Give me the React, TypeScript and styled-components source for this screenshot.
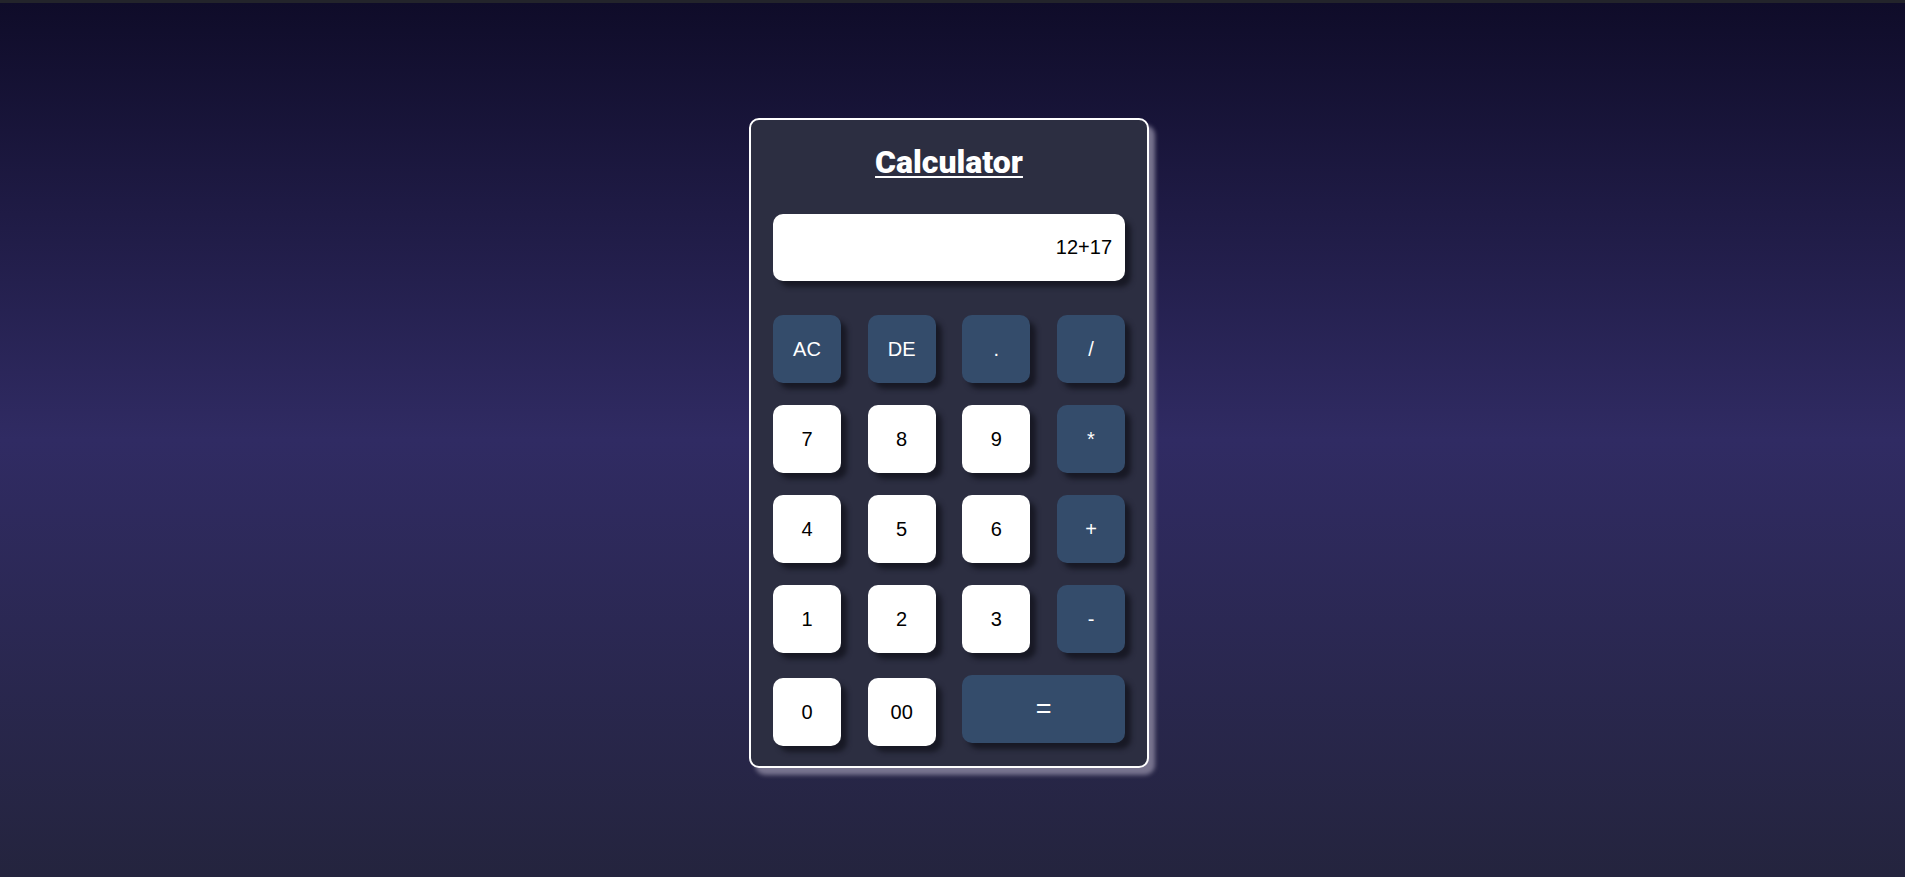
import React from "react";
import styled, { createGlobalStyle } from "styled-components";

const Global = createGlobalStyle`
  html, body { margin: 0; padding: 0; }
  body { font-family: "Liberation Sans", Arial, sans-serif; background: #24243e; }
  * { box-sizing: border-box; }
`;

const Page = styled.div`
  min-height: 100vh;
  display: flex;
  flex-direction: column;
`;

const TopStrip = styled.div`
  height: 3px;
  background: #23242b;
  flex-shrink: 0;
`;

const Main = styled.main`
  flex: 1;
  display: flex;
  justify-content: center;
  align-items: flex-start;
  padding: 115px 7px 0 0;
  background: linear-gradient(to bottom, #0f0c29, #302b63, #24243e);
`;

const Card = styled.div`
  width: 400px;
  background: #2c2e41;
  border: 2px solid #ffffff;
  border-radius: 10px;
  padding: 24px 22px 20px;
  box-shadow: 6px 7px 4px #78748f;
  display: flex;
  flex-direction: column;
`;

const Title = styled.h1`
  margin: 0;
  text-align: center;
  color: #ffffff;
  font-family: Roboto, "Liberation Sans", Arial, sans-serif;
  font-weight: 900;
  font-size: 32px;
  line-height: 37px;
  text-decoration: underline;
  text-decoration-thickness: 2px;
  text-underline-offset: 3px;
`;

const Display = styled.div`
  margin-top: 33px;
  height: 67px;
  background: #ffffff;
  border-radius: 10px;
  box-shadow: 6px 6px 5px #181925;
  display: flex;
  align-items: center;
  justify-content: flex-end;
  padding: 0 13px;
  font-family: "Liberation Sans", Arial, sans-serif;
  font-size: 20px;
  color: #000000;
`;

const Keypad = styled.div`
  margin-top: 34px;
  display: grid;
  grid-template-columns: repeat(4, 68px);
  justify-content: space-between;
  row-gap: 22px;
`;

const Key = styled.button<{ $dark?: boolean; $wide?: boolean; $shift?: number; $big?: boolean }>`
  height: 68px;
  margin-top: ${(p) => p.$shift ?? 0}px;
  grid-column: ${(p) => (p.$wide ? "span 2" : "auto")};
  border: none;
  border-radius: 10px;
  background: ${(p) => (p.$dark ? "#344c6b" : "#ffffff")};
  color: ${(p) => (p.$dark ? "#ffffff" : "#000000")};
  box-shadow: 6px 6px 5px #181925;
  font-family: "Liberation Sans", Arial, sans-serif;
  font-size: ${(p) => (p.$big ? "27px" : "20px")};
  display: flex;
  align-items: center;
  justify-content: center;
  padding: 0;
  cursor: pointer;
`;

type K = { label: string; dark?: boolean; wide?: boolean; shift?: number; big?: boolean };

const keys: K[] = [
  { label: "AC", dark: true },
  { label: "DE", dark: true },
  { label: ".", dark: true },
  { label: "/", dark: true },
  { label: "7" },
  { label: "8" },
  { label: "9" },
  { label: "*", dark: true },
  { label: "4" },
  { label: "5" },
  { label: "6" },
  { label: "+", dark: true },
  { label: "1" },
  { label: "2" },
  { label: "3" },
  { label: "-", dark: true },
  { label: "0", shift: 3 },
  { label: "00", shift: 3 },
  { label: "=", dark: true, wide: true, big: true },
];

export default function App() {
  return (
    <>
      <Global />
      <Page>
        <TopStrip />
        <Main>
          <Card>
            <Title>Calculator</Title>
            <Display>12+17</Display>
            <Keypad>
              {keys.map((k) => (
                <Key key={k.label} $dark={k.dark} $wide={k.wide} $shift={k.shift} $big={k.big}>
                  {k.label}
                </Key>
              ))}
            </Keypad>
          </Card>
        </Main>
      </Page>
    </>
  );
}
